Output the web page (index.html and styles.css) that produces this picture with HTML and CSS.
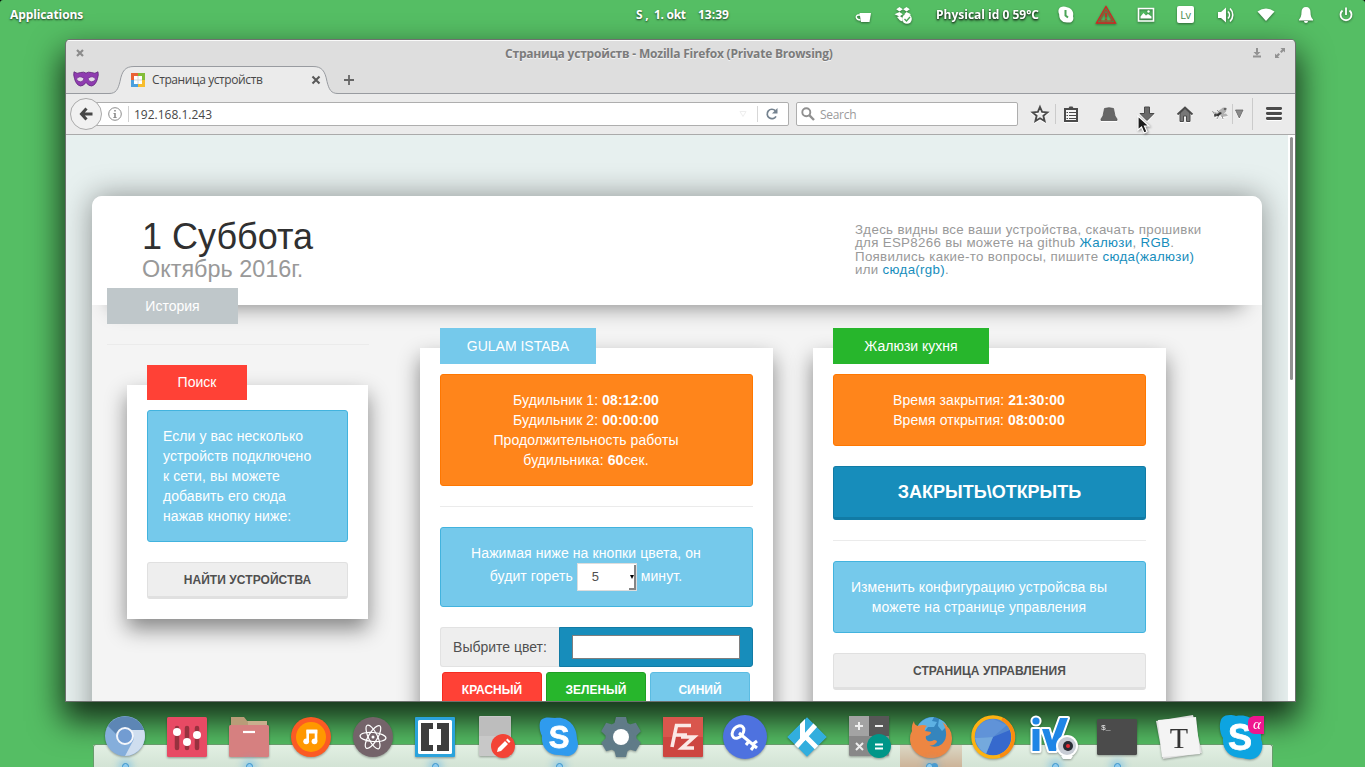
FILE: index.html
```html
<!DOCTYPE html>
<html lang="ru">
<head>
<meta charset="utf-8">
<title>Страница устройств</title>
<link rel="stylesheet" href="styles.css">
</head>
<body>
<div class="desktop">
  <header class="panel">
    <span class="panel-apps">Applications</span>
    <span class="panel-clock"><span>S ,</span><span>1. okt</span><span>13:39</span></span>
    <div class="tray">
      <svg class="tray-icon cup" viewBox="0 0 20 20"><path d="M6.500 8h11.500l-1.500 9H8z" fill="#fff"/><path d="M7 10H5.500C2 10 2.500 15 7.500 15" fill="none" stroke="#fff" stroke-width="1.300"/></svg>
      <svg class="tray-icon drop" viewBox="0 0 20 20" fill="#fff"><path d="M6.500 2l3.300 2.200-3.300 2.200L3.200 4.200zM13.500 2l3.300 2.200-3.300 2.200-3.300-2.200zM6.500 7l3.300 2.200-3.300 2.200L1.500 9.200zM13.500 7l4.500 2.200-3.500 2-3.300-2zM4 12l3-1 2.500 2v3.500L7 15.500z"/><circle cx="14" cy="14" r="4.800"/><path d="M11.500 14l2 2 3.500-4" fill="none" stroke="#4ba457" stroke-width="1.400"/></svg>
      <span class="tray-temp">Physical id 0 59°C</span>
      <svg class="tray-icon skypetray" viewBox="0 0 20 20"><path d="M4 2.500C7 1 9 1.500 11 2.200c5 1 7 5 6 9 1.500 4-1.500 7-5 6.300C6 18 3 14 3.200 9.500 2 7 2 4 4 2.500z" fill="#fff"/><path d="M9.500 5v5.500l2.500 2" fill="none" stroke="#4ba457" stroke-width="2"/></svg>
      <svg class="tray-icon warn" viewBox="0 0 22 20"><path d="M11 1.500L20.500 18h-19z" fill="none" stroke="#d92020" stroke-width="1.300"/><path d="M11 5L4.700 16h12.600z" fill="none" stroke="#d92020" stroke-width=".8"/><path d="M11 8v4.500M11 13.500v1.500" stroke="#d92020" stroke-width="1.600"/></svg>
      <svg class="tray-icon img" viewBox="0 0 20 20"><path d="M2.500 3.500h15v12.500h-15z" fill="none" stroke="#fff" stroke-width="1.600"/><path d="M4.500 13.500v-2l3-3.500 2.500 2.500 2-1.500 3.500 2.500v2z" fill="#fff"/><circle cx="12.500" cy="6.500" r="1.200" fill="#fff"/></svg>
      <span class="lang">Lv</span>
      <svg class="tray-icon vol" viewBox="0 0 20 20"><path d="M2 7h3l5-4.500v15L5 13H2z" fill="#fff"/><path d="M12 6.500a5 5 0 0 1 0 7M14 3.500a9 9 0 0 1 0 13" fill="none" stroke="#fff" stroke-width="1.600"/></svg>
      <svg class="tray-icon wifi" viewBox="0 0 20 20"><path d="M1.500 6.500Q10 .5 18.500 6.500L10 16z" fill="#fff"/></svg>
      <svg class="tray-icon bell" viewBox="0 0 20 20" fill="#fff"><path d="M10 2c3 0 4.500 2 4.500 5 0 4 1 6 2.500 7.500v1H3v-1C4.500 13 5.500 11 5.500 7c0-3 1.500-5 4.500-5z"/><path d="M8 16h4a2 2 0 0 1-4 0z"/></svg>
      <svg class="tray-icon power" viewBox="0 0 20 20" fill="none" stroke="#fff" stroke-width="1.800"><path d="M6.500 5.500a5.500 5.500 0 1 0 7 0M10 2.500V10"/></svg>
    </div>
  </header>

  <main class="window">
    <div class="titlebar">
      <svg class="win-close" viewBox="0 0 10 10"><path d="M2 2l6 6M8 2L2 8" stroke="#8b8b8b" stroke-width="2.200"/></svg>
      <span class="win-title">Страница устройств - Mozilla Firefox (Private Browsing)</span>
      <span class="win-tools">
        <svg viewBox="0 0 10 12"><path d="M4 1h2v4h2.500L5 8.500 1.500 5H4zM1 8.500h8V10.500H1z" fill="#929292"/></svg>
        <svg viewBox="0 0 10 12"><path d="M5.500 1H10v4.500L8.500 4 6.500 6 5 4.500l2-2zM4.500 11H0V6.500L1.500 8l2-2L5 7.500l-2 2z" fill="#929292"/></svg>
      </span>
    </div>
    <div class="tabs">
      <svg class="mask" viewBox="0 0 26 16"><path d="M1 .8Q4 3.400 7.500 1.500 11 .5 13 2.200 15 .5 18.500 1.500 22 3.400 25 .8 25.800 4 24.500 7.500 23 14 18.500 15 15.500 15 13 11.500 10.500 15 7.500 15 3 14 1.500 7.500.2 4 1 .8z" fill="#8f3bb0" stroke="#5d2179" stroke-width=".8"/><path d="M3.500 8Q6.500 3.800 11 7.500 10.300 10.800 7.500 10.800 4.500 10.800 3.500 8zM15 7.500Q19.500 3.800 22.500 8 21.500 10.800 18.500 10.800 15.700 10.800 15 7.500z" fill="#e4dbe8" stroke="#6a2a88" stroke-width=".7"/></svg>
      <div class="tab">
        <svg class="tab-shape" viewBox="0 0 244 29"><path d="M0 27.500h5c7 0 9-4 11-12C18 5 21 .5 30 .5h179c9 0 12 4.500 14 15 2 8 4 12 11 12h10V29H0z" fill="#ebebeb"/><path d="M0 27.500h5c7 0 9-4 11-12C18 5 21 .5 30 .5h179c9 0 12 4.500 14 15 2 8 4 12 11 12h10" fill="none" stroke="#989ba0"/></svg>
        <svg class="favicon" viewBox="0 0 14 14"><path d="M0 0h8v4H4v4H0z" fill="#ea6336"/><path d="M7 0h7v8h-4V4H7z" fill="#83bd38"/><path d="M0 7h4v3h4v4H0z" fill="#4b9fdd"/><path d="M10 7h4v7H7v-4h3z" fill="#f7bd2e"/><path d="M3 3h8v8H3z" fill="#fff"/><path d="M7 3v8M3 7h8" stroke="#d6d6d6"/></svg>
        <span class="tab-title">Страница устройств</span>
        <svg class="tab-close" viewBox="0 0 10 10"><path d="M1.500 1.500l7 7M8.500 1.500l-7 7" stroke="#595959" stroke-width="2.100"/></svg>
      </div>
      <svg class="tab-new" viewBox="0 0 12 12"><path d="M6 1v10M1 6h10" stroke="#666" stroke-width="1.800"/></svg>
    </div>
    <div class="toolbar">
      <span class="back"><svg viewBox="0 0 16 16"><path d="M8.500 2.500L3.500 8l5 5.500M4 8h10.500" fill="none" stroke="#484848" stroke-width="3"/></svg></span>
      <div class="urlbar">
        <svg class="info" viewBox="0 0 14 14"><circle cx="7" cy="7" r="6.300" fill="none" stroke="#8c8c8c"/><path d="M6.200 3h1.600v1.500H6.200zM5.500 6h2.300v4h.8v1H5.400v-1h.8V7h-.7z" fill="#8c8c8c"/></svg>
        <span class="url-sep"></span>
        <span class="url">192.168.1.243</span>
        <svg class="url-drop" viewBox="0 0 8 8"><path d="M1 1.500h6L4 6.500z" fill="none" stroke="#eee"/></svg>
        <span class="reload"><svg viewBox="0 0 14 14"><path d="M11 9.300a4.700 4.700 0 1 1-.7-5.600" fill="none" stroke="#74828f" stroke-width="1.700"/><path d="M12.500 1v5.500H7z" fill="#74828f"/></svg></span>
      </div>
      <div class="search"><svg viewBox="0 0 14 14"><circle cx="5.300" cy="5.300" r="4" fill="none" stroke="#909090" stroke-width="1.900"/><path d="M8.200 8.200l4.800 4.800" stroke="#909090" stroke-width="2.400"/></svg><span>Search</span></div>
      <svg class="tool star" viewBox="0 0 20 20"><path d="M10 3l2.100 4.900 5.300.5-4 3.500 1.200 5.200L10 14.300l-4.600 2.800 1.200-5.200-4-3.500 5.300-.5z" fill="none" stroke="#4a4a4a" stroke-width="1.900"/></svg>
      <span class="divider d1"></span>
      <svg class="tool list" viewBox="0 0 20 20"><path d="M4 5h12v12H4z" fill="#f5f5f5" stroke="#4a4a4a" stroke-width="2"/><path d="M7 5l1.500-2.500h3L13 5z" fill="#4a4a4a"/><path d="M5.500 8.500h1.500M8 8.500h7.500M5.500 11.500h1.500M8 11.500h7.500M5.500 14.500h1.500M8 14.500h7.500" stroke="#4a4a4a" stroke-width="1.200"/></svg>
      <svg class="tool hat" viewBox="0 0 20 20"><path d="M5.500 4.500Q10 3 14.500 4.500L16 12l2 3v1.500H2V15l2-3z" fill="#666" stroke="#555" stroke-width=".8"/></svg>
      <svg class="tool dl" viewBox="0 0 20 20"><path d="M7.500 3h5v6.500H17L10 16.500 3 9.500h4.500z" fill="#6b6b6b" stroke="#4a4a4a"/></svg>
      <svg class="tool home" viewBox="0 0 20 20"><path d="M5 9v8.500h3.500V12h3v5.500H15V9l-5-4.500z" fill="#777" stroke="#4a4a4a"/><path d="M2.500 10.500L10 3.500l7.500 7" fill="none" stroke="#4a4a4a" stroke-width="1.800"/></svg>
      <svg class="tool fly" viewBox="0 0 20 20"><path d="M7 8l6-4.500 4 .5-1 4-5 3.500zM9 10l7-.5 2 2.500-6 1z" fill="#b0b0b0"/><path d="M3 9h3l2 1M4 13l3-2M7 15l2-4M12 12l1 3M9 8L7 6M2 7.500l2 1" fill="none" stroke="#8a8a8a" stroke-width=".9"/><path d="M6 11l4-3 2 1-4 3.500z" fill="#333"/><circle cx="5.500" cy="11" r="1.500" fill="#444"/><circle cx="15" cy="5" r="1.300" fill="#666"/></svg>
      <span class="divider d2"></span>
      <svg class="tool tri" viewBox="0 0 10 10"><path d="M1.500 1h7.500L5.300 9z" fill="#8b8b8b" stroke="#666" stroke-width=".8"/></svg>
      <span class="divider d3"></span>
      <svg class="tool menu" viewBox="0 0 20 20"><path d="M3.300 4.500h13.400M3.300 9.500h13.400M3.300 14.500h13.400" stroke="#4b4b4b" stroke-width="2.800" stroke-linecap="round"/></svg>
    </div>

    <div class="page">
      <div class="viewport">
        <div class="site">
          <div class="site-header">
            <div class="date"><h1>1 Суббота</h1><h2>Октябрь 2016г.</h2></div>
            <p class="about"><span>Здесь видны все ваши устройства, скачать прошивки</span><br>для ESP8266 вы можете на github <a>Жалюзи</a>, <a>RGB</a>.<br>Появились какие-то вопросы, пишите <a>сюда(жалюзи)</a><br>или <a>сюда(rgb)</a>.</p>
          </div>
          <div class="columns">
            <aside class="side">
              <div class="label gray">История</div>
              <hr class="rule">
              <section class="card small">
                <div class="label red">Поиск</div>
                <div class="alert info-box left">Если у вас несколько<br>устройств подключено<br>к сети, вы можете<br>добавить его сюда<br>нажав кнопку ниже:</div>
                <div class="button secondary">НАЙТИ УСТРОЙСТВА</div>
              </section>
            </aside>
            <section class="card lamp">
              <div class="label blue">GULAM ISTABA</div>
              <div class="alert warning">Будильник 1: <b>08:12:00</b><br>Будильник 2: <b>00:00:00</b><br>Продолжительность работы<br>будильника: <b>60</b>сек.</div>
              <hr class="rule">
              <div class="alert info-box timer">Нажимая ниже на кнопки цвета, он<br>будит гореть <span class="select">5<i></i></span> минут.</div>
              <div class="color-row"><span class="prefix">Выбрите цвет:</span><span class="picker"><span class="swatch"></span></span></div>
              <div class="colors"><span class="c-red">КРАСНЫЙ</span><span class="c-green">ЗЕЛЕНЫЙ</span><span class="c-blue">СИНИЙ</span></div>
            </section>
            <section class="card blinds">
              <div class="label green">Жалюзи кухня</div>
              <div class="alert warning">Время закрытия: <b>21:30:00</b><br>Время открытия: <b>08:00:00</b></div>
              <div class="button primary">ЗАКРЫТЬ\ОТКРЫТЬ</div>
              <hr class="rule">
              <div class="alert info-box">Изменить конфигурацию устройсва вы<br>можете на странице управления</div>
              <div class="button secondary">СТРАНИЦА УПРАВЛЕНИЯ</div>
            </section>
          </div>
        </div>
      </div>
      <div class="scrollbar"><span></span></div>
    </div>
  </main>

  <footer class="dock">
    <div class="dock-item running"><svg viewBox="-31 -30 62 60"><circle cy="-1" r="20" fill="#85aedb"/><path d="M-17-11A20 20 0 0 1 19-7H0A9 9 0 0 0-8-2z" fill="#5d86b5"/><path d="M19-7A20 20 0 0 1 0 19L8 4Q11-2 6-7z" fill="#cfdeef"/><circle cy="-1" r="8" fill="#729cd2" stroke="#f3f6fb" stroke-width="2"/></svg></div>
    <div class="dock-item"><svg viewBox="-31 -30 62 60"><rect x="-20" y="-20" width="40" height="40" rx="1.500" fill="#e84a64"/><path d="M-10-9v20M0-9v20M10-9v20" stroke="#97323f" stroke-width="4.500" stroke-linecap="round"/><g fill="#fff"><circle cx="-10" cy="-5" r="4"/><circle cy="5" r="4"/><circle cx="10" cy="-2" r="4"/></g></svg></div>
    <div class="dock-item running"><svg viewBox="-31 -30 62 60"><path d="M-4-16h22v6h-26z" fill="#c9ae8d"/><path d="M-18-20h13l4 5v5h-17z" fill="#b99c78"/><rect x="-20" y="-12" width="40" height="32" rx="1.500" fill="#d68080"/><path d="M-6-5H6" stroke="#fff" stroke-width="2.200"/></svg></div>
    <div class="dock-item"><svg viewBox="-31 -30 62 60"><circle r="20" fill="#fb5a24"/><circle r="15" fill="#ff9800"/><path d="M-3.300 4V-6H5V4" fill="none" stroke="#fff" stroke-width="2.600"/><path d="M-4.500-7.300H6.300v3.800H-4.500z" fill="#fff"/><circle cx="-4.800" cy="4.300" r="2.900" fill="#fff"/><circle cx="3.500" cy="4.300" r="2.900" fill="#fff"/></svg></div>
    <div class="dock-item"><svg viewBox="-31 -30 62 60"><circle r="20" fill="#74646a"/><g fill="none" stroke="#fff" stroke-width="1.200"><ellipse rx="13" ry="4.500" transform="rotate(5)"/><ellipse rx="13" ry="4.500" transform="rotate(64)"/><ellipse rx="13" ry="4.500" transform="rotate(121)"/></g><circle r="1.500" fill="#fff"/></svg></div>
    <div class="dock-item running"><svg viewBox="-31 -30 62 60"><rect x="-20" y="-20" width="40" height="40" rx="1" fill="#2aa3dc"/><rect x="-17" y="-17" width="34" height="34" rx="1.500" fill="#fff"/><path d="M-14-14h12v6h-4V8h4v6h-12zM14-14H2v6h4V8H2v6h12z" fill="#3d3d3d"/></svg></div>
    <div class="dock-item"><svg viewBox="-31 -30 62 60"><rect x="-18" y="-21" width="32" height="40" rx="1" fill="#c8c8c8"/><path d="M-18-1h32V-20h-32z" fill="#bdbdbd"/><circle cx="6" cy="9" r="12" fill="#f34336"/><path d="M0 15l1-4 7-7 3 3-7 7zM9 3l1.500-1.500 3 3L12 6z" fill="#fff"/></svg></div>
    <div class="dock-item running"><svg viewBox="-31 -30 62 60"><path d="M-18-17c5-4 10-2 14-2C8-21 18-12 18 2c3 8-1 16-9 17-4 0-5-1-9-1-12 0-18-9-17-19-3-6-3-13-1-16z" fill="#2f9bee"/><text class="skype-s" x="0" y="11" text-anchor="middle">S</text></svg></div>
    <div class="dock-item"><svg viewBox="-31 -30 62 60"><g fill="#607b88"><circle r="15.500"/><path id="tooth" d="M-7-12l2-8H5l2 8z"/><use href="#tooth" transform="rotate(60)"/><use href="#tooth" transform="rotate(120)"/><use href="#tooth" transform="rotate(180)"/><use href="#tooth" transform="rotate(240)"/><use href="#tooth" transform="rotate(300)"/></g><circle r="8" fill="#fff"/></svg></div>
    <div class="dock-item"><svg viewBox="-31 -30 62 60"><rect x="-20" y="-20" width="40" height="40" rx="1" fill="#cd4540"/><path d="M-20-20h40V0h-40z" fill="#d9564d"/><path d="M-11 10L-6.500-11.500H8M-8-2H4M-2 0H11L-1 11H11" fill="none" stroke="#fbe9e6" stroke-width="3.600"/></svg></div>
    <div class="dock-item"><svg viewBox="-31 -30 62 60"><circle r="22" fill="#4e72df"/><g fill="none" stroke="#fff" stroke-width="3"><ellipse cx="-7" cy="-5" rx="5" ry="7" transform="rotate(40 -7 -5)"/><path d="M-6-4L12 11M4 4l-3 4M9 9l-3 4M8 7l4-3"/></g></svg></div>
    <div class="dock-item"><svg viewBox="-31 -30 62 60"><clipPath id="diamond"><path d="M0-20L20 0 0 20-20 0z"/></clipPath><g clip-path="url(#diamond)"><path d="M0-20L20 0 0 20-20 0z" fill="#32aede"/><path d="M-4.500-20V4M-14 13L12-16M-1 0l13 13" fill="none" stroke="#fff" stroke-width="5"/></g></svg></div>
    <div class="dock-item"><svg viewBox="-31 -30 62 60"><rect x="-20" y="-21" width="40" height="40" rx="1.500" fill="#888"/><path d="M-20-21H0V-1h-20z" fill="#a3a3a3"/><path d="M0-21h20V-1H0z" fill="#575757"/><path d="M-14-11h8M-10-15v8M6-11h8M-13 6l7 7M-6 6l-7 7" stroke="#eee" stroke-width="2"/><circle cx="10" cy="9" r="12" fill="#009688"/><path d="M6 7.500h8M6 11.500h8" stroke="#fff" stroke-width="2"/></svg></div>
    <div class="dock-item active running two"><svg viewBox="-31 -30 62 60"><circle cx="1" cy="-4" r="16" fill="#3585bd"/><path d="M-12-13Q-6-20 3-20l-2 4 5 1-3 5-6 0-3 4-8-3zM8-18q6 2 8 7l-5 5-4-5z" fill="#5db1e3"/><path d="M-17-16q0 4 4 5 5-2 9 0-3 2-2 5l6 1q0 3-5 4-1 3 2 5 3 1 6-1 3 0 3 2-4 5-9 3 8 4 14-1 5-5 4-12-1-7-4-10 10 6 10 16C21 14 11 21 0 21S-21 13-21 2q0-5 2-8-1-5 2-10z" fill="#ed8642"/></svg></div>
    <div class="dock-item"><svg viewBox="-31 -30 62 60"><circle r="19.500" fill="#5387d0"/><path d="M0 0L-7 17A18 18 0 0 0 17-7z" fill="#3669cd"/><path d="M0 0L-18 1Q-17-16 0-18L14-12z" fill="#6093d8"/><path d="M0 0L-18 1Q-16 12-7 17z" fill="#74a9dd"/><circle r="20" fill="none" stroke="#fdb211" stroke-width="3.500"/><path d="M9-18A20 20 0 0 1 7 19" fill="none" stroke="#fa8b10" stroke-width="3.500"/></svg></div>
    <div class="dock-item running"><svg viewBox="-31 -30 62 60"><g fill="#1f86e6" stroke="#fff" stroke-width="4" paint-order="stroke" stroke-linejoin="round"><circle cx="-19" cy="-16" r="3.600"/><path d="M-22.500-8h7v22h-7zM-13-8h7l3 11L5-19h8L1 14h-7z"/></g><circle cx="12" cy="9" r="11" fill="#fff"/><circle cx="12" cy="9" r="9" fill="#c7ccd5"/><circle cx="13" cy="9" r="5" fill="#292c35"/><circle cx="13" cy="9" r="2" fill="#e52b35"/><path d="M6 19h12l-2 3H8z" fill="#fff"/></svg></div>
    <div class="dock-item running"><svg viewBox="-31 -30 62 60"><rect x="-20" y="-18" width="40" height="36" rx="1.500" fill="#4b4b4b"/><text class="prompt" x="-16" y="-7">$_</text></svg></div>
    <div class="dock-item"><svg viewBox="-31 -30 62 60"><path d="M-23-16L14-22 23 16-16 22z" fill="#dedede"/><path d="M-21-17L17-20 21 17-17 20z" fill="#f4f4f4"/><text class="typora" x="0" y="11" text-anchor="middle">T</text></svg></div>
    <div class="dock-item"><svg viewBox="-31 -30 62 60"><path d="M-19-19c4-4 10-3 14-2C10-24 21-13 20 2c4 9-1 19-9 20-5 1-7-1-10-1-13 0-20-9-19-20-4-6-4-16-1-20z" fill="#0da4e1"/><text class="skype-s big" x="-1" y="13" text-anchor="middle">S</text><path d="M7-14c0-5 3-7 7-7h9v18h-9c-5 0-7-4-7-8z" fill="#ef168f"/><text class="alpha" x="16" y="-8" text-anchor="middle">α</text></svg></div>
  </footer>
  <svg class="cursor" viewBox="0 0 14 20"><path d="M1 1v14l3.500-3 2.500 6 3-1.300-2.500-5.700H12z" fill="#1c1c1c" stroke="#fff" stroke-width="1.200"/></svg>
</div>
</body>
</html>
```
FILE: styles.css
```css
* { box-sizing: border-box; }
body { margin: 0; background: #000; overflow: hidden; font-family: "Liberation Sans", Arial, sans-serif; }
svg { display: block; flex: none; overflow: visible; }
.desktop { position: relative; display: flex; flex-direction: column; width: 1365px; height: 767px; overflow: hidden; background: #55be64; border-radius: 3px 3px 0 0; }

/* top panel */
.panel { display: flex; height: 29px; flex: none; align-items: center; color: #fff; font: bold 12px/29px "Open Sans", sans-serif; text-shadow: 0 1px 2px rgba(0,0,0,.7); letter-spacing: -.3px; position: relative; z-index: 2; white-space: pre; }
.panel-apps { width: 636px; padding-left: 10px; letter-spacing: -.1px; }
.panel-clock { display: flex; width: 217px; }
.panel-clock span:nth-child(1) { width: 18px; }
.panel-clock span:nth-child(2) { width: 44px; }
.panel-clock span:nth-child(3) { letter-spacing: 0; }
.tray { display: flex; align-items: center; filter: drop-shadow(0 1px 1px rgba(0,0,0,.45)); }
.tray-icon { width: 20px; height: 20px; margin-top: 1px; }
.drop { margin-left: 20px; }
.tray-temp { width: 103px; margin-left: 23px; letter-spacing: 0; }
.skypetray { margin-left: 17px; }
.warn { width: 22px; margin-left: 19px; }
.img { margin-left: 19px; }
.lang { width: 17px; height: 17px; margin-left: 21px; border-radius: 2px; background: #fff; color: #4a8c52; font: 11px/17px "Open Sans", sans-serif; text-align: center; text-shadow: none; }
.vol { margin-left: 22px; }
.wifi, .bell, .power { margin-left: 20px; }

/* browser window */
.window { width: 1229px; height: 661px; flex: none; margin: 11px 0 0 66px; display: flex; flex-direction: column; border-radius: 4px 4px 0 0; background: #dedede; box-shadow: 0 0 0 1px #6d716e, 0 16px 32px 4px rgba(0,0,0,.75); overflow: hidden; }
.titlebar { display: flex; align-items: center; height: 26px; flex: none; padding: 0 9px; box-shadow: inset 0 1px #fafafa; color: #7b7b7b; font: bold 12px/26px "Open Sans", sans-serif; text-shadow: 0 1px #f3f3f3; }
.win-close { width: 10px; height: 10px; }
.win-title { margin-left: 420px; width: 740px; padding-top: 2px; letter-spacing: -.2px; white-space: nowrap; }
.win-tools { display: flex; gap: 13px; margin-left: 7px; }
.win-tools svg { width: 10px; height: 12px; }
.tabs { display: flex; height: 28px; flex: none; border-bottom: 1px solid #989ba0; }
.mask { width: 26px; height: 16px; margin: 5px 0 0 7px; }
.tab { position: relative; display: flex; align-items: center; width: 235px; height: 28px; margin-left: 5px; padding-left: 27px; color: #474747; font: 12px/26px "Open Sans", sans-serif; }
.tab-shape { position: absolute; left: 0; top: 0; width: 244px; height: 29px; }
.favicon { position: relative; width: 14px; height: 14px; }
.tab-title { position: relative; width: 164px; margin-left: 7px; letter-spacing: -.4px; white-space: nowrap; }
.tab-close { position: relative; width: 10px; height: 10px; margin-left: -5px; }
.tab-new { position: relative; width: 12px; height: 12px; margin: 8px 0 0 4px; }
.toolbar { display: flex; align-items: center; height: 41px; flex: none; padding-left: 4px; background: #ebebeb; border-bottom: 1px solid #aaa; color: #474747; font: 12px/22px "Open Sans", sans-serif; }
.back { position: relative; z-index: 1; display: flex; align-items: center; justify-content: center; width: 32px; height: 32px; border: 1px solid #aaa; border-radius: 50%; background: #f1f1f1; }
.back svg { width: 16px; height: 16px; }
.urlbar { display: flex; align-items: center; width: 695px; height: 24px; margin-left: -8px; padding-left: 13px; border: 1px solid #aeaeae; border-radius: 2px; background: #fff; }
.info { width: 14px; height: 14px; }
.url-sep { width: 1px; height: 16px; margin-left: 6px; background: #d1d1d1; }
.url { width: 605px; margin-left: 5px; padding-top: 2px; }
.url-drop { width: 8px; height: 8px; }
.reload { display: flex; align-items: center; justify-content: center; height: 16px; margin-left: 10px; width: 28px; border-left: 1px solid #d7d7d7; }
.reload svg { width: 14px; height: 14px; }
.search { display: flex; align-items: center; width: 222px; height: 24px; margin-left: 7px; padding-left: 4px; border: 1px solid #aeaeae; border-radius: 2px; background: #fff; color: #9b9b9b; letter-spacing: -.3px; }
.search span { padding-top: 2px; }
.search svg { width: 14px; height: 14px; margin-right: 5px; }
.tool { width: 20px; height: 20px; filter: drop-shadow(0 1px 0 #fff); }
.divider { width: 1px; height: 20px; background: #cbcbcb; }
.star { margin-left: 12px; }
.d1, .list { margin-left: 5px; }
.hat, .dl, .home { margin-left: 18px; }
.fly { margin-left: 15px; }
.d2 { margin-left: 2px; }
.tri { width: 10px; height: 10px; margin-left: 1px; }
.d3 { height: 32px; margin-left: 8px; }
.menu { margin-left: 11px; }

/* web page */
.page { display: flex; height: 566px; overflow: hidden; }
.viewport { width: 1222px; padding: 61px 26px 0; background: #e7f0ef; overflow: hidden; }
.scrollbar { width: 7px; padding: 2px 0 0 2px; background: #fff; }
.scrollbar span { display: block; width: 3px; height: 243px; border-radius: 2px; background: #929292; }
.site { width: 1170px; height: 700px; border-radius: 10px 10px 0 0; background: #f4f4f4; box-shadow: 0 0 30px rgba(0,0,0,.4); }
.site-header { display: flex; height: 109px; padding: 23px 50px 0; border-radius: 10px 10px 0 0; background: #fff; box-shadow: 0 22px 20px -20px rgba(0,0,0,.45); }
.date { width: 713px; }
h1 { margin: 0; color: #303030; font-size: 36px; font-weight: 400; line-height: 36px; }
h2 { margin: 0; color: #999; font-size: 23.4px; font-weight: 400; line-height: 28px; }
.about { margin: 4px 0 0; color: #999; font-size: 13.3px; line-height: 13.4px; letter-spacing: .32px; white-space: nowrap; }
.about a { color: #168dbc; }
.columns { display: flex; align-items: flex-start; padding-left: 15px; }
.side { width: 262px; margin-top: -17px; margin-right: 51px; }
.label { position: relative; height: 36px; width: 156px; color: #fff; font-size: 14px; line-height: 36px; text-align: center; }
.gray { width: 131px; background: #bfc7ca; }
.red { width: 100px; height: 35px; line-height: 35px; background: #ff4136; }
.blue { background: #75c9eb; }
.green { background: #27b62c; }
.rule { height: 1px; margin: 20px 0; border: 0; background: #ebebeb; }
.side > .rule { margin-bottom: 40px; }
.card { display: flow-root; width: 353px; height: 500px; padding: 0 20px; background: #fff; box-shadow: 0 10px 20px rgba(0,0,0,.45); margin-top: 43px; }
.card > .label { margin: -20px 0 10px; }
.lamp { margin-right: 40px; }
.small { width: 241px; height: 234px; margin: 0 0 0 20px; }
.alert { border: 1px solid; border-radius: 3px; padding: 15px 36px 15px 15px; color: #fff; font-size: 14px; line-height: 20px; letter-spacing: .09px; text-align: center; white-space: nowrap; }
.warning { background: #ff851b; border-color: #ff7700; }
.info-box { background: #75c9eb; border-color: #42b3de; }
.left { text-align: left; letter-spacing: .07px; }
.button { display: flex; align-items: center; justify-content: center; height: 37px; margin-top: 20px; border: 1px solid; border-bottom-width: 3px; border-radius: 3px; font-size: 12px; font-weight: 700; letter-spacing: .06px; }
.secondary { background: #eee; border-color: #e0e0e0; color: #505050; }
.primary { height: 54px; background: #178dbb; border-color: #117ba5; color: #fff; font-size: 18px; letter-spacing: 0; }
.timer { height: 80px; }
.select { position: relative; display: inline-block; width: 60px; height: 28px; padding-left: 14px; border: 1px solid #ddd; background: #fff; color: #505050; font-size: 13px; line-height: 26px; text-align: left; vertical-align: middle; }
.select i { position: absolute; right: 0; top: 1px; width: 7px; height: 25px; border-right: 2px solid #858585; border-bottom: 2px solid #858585; }
.select i::before { content: ""; position: absolute; left: 1px; top: 10px; border: 2.5px solid transparent; border-top: 4px solid #000; }
.color-row { display: flex; height: 40px; margin-top: 20px; }
.prefix { width: 119px; border: 1px solid #e2e2e2; border-right: 0; border-radius: 3px 0 0 3px; background: #eee; color: #505050; font-size: 14px; line-height: 38px; text-align: center; }
.picker { flex: 1; padding: 7px 12px; border: 1px solid #117ba5; border-radius: 0 3px 3px 0; background: #178dbb; }
.swatch { display: block; height: 24px; border: 1px solid #7e7e7e; background: #fff; }
.colors { display: flex; gap: 4px; margin: 5px 0 0 2px; color: #fff; font-size: 12px; font-weight: 700; line-height: 34px; text-align: center; }
.colors span { width: 100px; height: 37px; border: 1px solid; border-radius: 3px; }
.colors .c-red { background: #ff4136; border-color: #f52b20; }
.colors .c-green { background: #27b62c; border-color: #1e9f23; }
.colors .c-blue { background: #75c9eb; border-color: #5bbce2; }

/* dock */
.dock { position: relative; z-index: 1; display: flex; width: 1180px; height: 60px; margin: 6px 0 0 93px; padding-left: 1px; background: linear-gradient(transparent 38px, #e2f0e3 38px, #d3e3d5); }
.dock::before { content: ""; position: absolute; inset: 37px 0 0; border: 1px solid #679b6b; border-bottom: 0; border-radius: 3px 3px 0 0; }
.dock-item { position: relative; width: 62px; height: 60px; flex: none; }
.dock-item svg { position: relative; width: 62px; height: 60px; filter: drop-shadow(0 1px 1px rgba(0,0,0,.35)); }
.dock-item.active { background: linear-gradient(transparent 38px, #dbd8c5 38px, #cdb499); }
.running::after { content: ""; position: absolute; left: 28px; bottom: -3px; width: 5px; height: 5px; border: 1px solid #3b94cb; border-radius: 50%; background: #8dcbef; box-shadow: 0 0 7px 4px rgba(90,180,235,.45); }
.two::after { left: 26px; box-shadow: 5px 0 0 #4a9bd0, 2px 0 7px 4px rgba(90,180,235,.45); }
.skype-s { font: bold 31px "Liberation Sans", sans-serif; fill: #fff; stroke: #fff; stroke-width: .8px; }
.big { font-size: 36px; }
.prompt { font: 8px "Liberation Mono", monospace; fill: #eee; }
.typora { font: 30px "Liberation Serif", serif; fill: #333; }
.alpha { font: italic 15px "Liberation Serif", serif; fill: #fff; }
.cursor { position: absolute; z-index: 3; left: 1137px; top: 115px; width: 14px; height: 20px; filter: drop-shadow(1px 1px 1px rgba(0,0,0,.4)); }
```
